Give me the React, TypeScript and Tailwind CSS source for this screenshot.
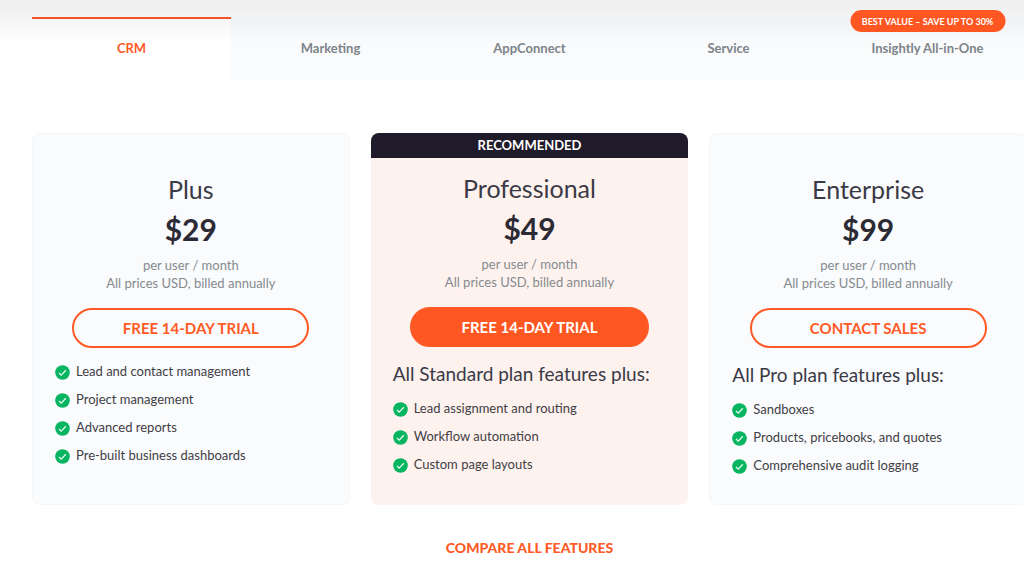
import { useState } from 'react';
import clsx from 'clsx';

type Plan = {
  name: string;
  price: string;
  cta: string;
  heading?: string;
  features: string[];
  recommended?: boolean;
};

const tabs = ['CRM', 'Marketing', 'AppConnect', 'Service', 'Insightly All-in-One'];

const plans: Plan[] = [
  {
    name: 'Plus',
    price: '$29',
    cta: 'FREE 14-DAY TRIAL',
    features: [
      'Lead and contact management',
      'Project management',
      'Advanced reports',
      'Pre-built business dashboards',
    ],
  },
  {
    name: 'Professional',
    price: '$49',
    cta: 'FREE 14-DAY TRIAL',
    heading: 'All Standard plan features plus:',
    features: ['Lead assignment and routing', 'Workflow automation', 'Custom page layouts'],
    recommended: true,
  },
  {
    name: 'Enterprise',
    price: '$99',
    cta: 'CONTACT SALES',
    heading: 'All Pro plan features plus:',
    features: ['Sandboxes', 'Products, pricebooks, and quotes', 'Comprehensive audit logging'],
  },
];

const CheckIcon = () => (
  <svg className="mt-1 h-[15px] w-[15px] shrink-0" viewBox="0 0 15 15" fill="none" aria-hidden="true">
    <circle cx="7.5" cy="7.5" r="7.3" fill="#07b561" />
    <path d="M4 8L6.2 10.1L10.8 5.3" stroke="#e4faee" strokeWidth="1.3" />
  </svg>
);

const PlanCard = ({ plan }: { plan: Plan }) => (
  <article
    className={clsx(
      'flex flex-col overflow-hidden rounded-lg pb-[29px]',
      plan.recommended ? 'bg-[#fef2ee]' : 'border border-[#f5f6f8] bg-[#fafbfd]'
    )}
  >
    {plan.recommended ? (
      <div className="mb-[14px] bg-[#1f1b2a] text-center text-[13px] leading-[25px] font-bold text-white">
        RECOMMENDED
      </div>
    ) : (
      <div className="h-[39px]" />
    )}
    <div className="px-[22px] text-center">
      <h2 className="text-[25px] leading-8 text-[#3a3a47]">{plan.name}</h2>
      <p className="mt-1 text-[30px] leading-10 font-bold text-[#2c2a34]">{plan.price}</p>
      <p className="mt-[7px] text-[13px] leading-[18px] text-[#858a8f]">
        per user / month
        <br />
        All prices USD, billed annually
      </p>
    </div>
    <button
      type="button"
      className={clsx(
        'mx-auto mt-4 h-10 w-3/4 rounded-full border-2 border-[#ff5a26] text-[15px] font-bold',
        plan.recommended ? 'bg-[#ff5722] text-white' : 'text-[#ff5a26]'
      )}
    >
      {plan.cta}
    </button>
    <div className="mt-[13px] px-[22px]">
      {plan.heading && (
        <h3 className="mb-[10px] text-[19px] leading-7 text-[#3a3a47]">{plan.heading}</h3>
      )}
      <ul className="flex flex-col gap-2">
        {plan.features.map((feature) => (
          <li key={feature} className="flex gap-[6px] text-[13px] leading-5 text-[#3f4045]">
            <CheckIcon />
            {feature}
          </li>
        ))}
      </ul>
    </div>
  </article>
);

const App = () => {
  const [active, setActive] = useState('CRM');

  return (
    <main className="relative overflow-hidden bg-white font-['Lato',sans-serif]">
      {/* Shadow left by the site header */}
      <div className="pointer-events-none absolute inset-x-0 top-0 z-10 h-11 bg-linear-to-b from-black/6 from-15% to-transparent" />

      <div className="-mr-[3px] ml-8 pt-[17px]">
        {/* Product tabs */}
        <div role="tablist" className="grid grid-cols-5">
          {tabs.map((tab) => (
            <div key={tab} className="relative">
              <button
                type="button"
                role="tab"
                aria-selected={active === tab}
                onClick={() => setActive(tab)}
                className={clsx(
                  'h-[63px] w-full border-t-2 pb-[2px] text-[13px] font-bold',
                  active === tab
                    ? 'border-[#ff5722] bg-white text-[#ff5a26]'
                    : 'border-[#fafbfd] bg-[#fafbfd] text-[#7d8489]'
                )}
              >
                {tab}
              </button>
              {tab === 'Insightly All-in-One' && (
                <span className="absolute -top-[7px] left-1/2 z-20 h-[22px] w-[155px] -translate-x-1/2 rounded-full bg-[#ff5722] text-center text-[9px] leading-[23px] font-bold whitespace-nowrap text-white">
                  BEST VALUE – SAVE UP TO 30%
                </span>
              )}
            </div>
          ))}
        </div>

        {/* Plans */}
        <section className="mt-[53px] grid grid-cols-3 gap-[21px]">
          {plans.map((plan) => (
            <PlanCard key={plan.name} plan={plan} />
          ))}
        </section>

        <div className="pt-[30px] pb-4 text-center">
          <a href="#features" className="text-sm leading-5 font-black text-[#ff5a26]">
            COMPARE ALL FEATURES
          </a>
        </div>
      </div>
    </main>
  );
};

export default App;
